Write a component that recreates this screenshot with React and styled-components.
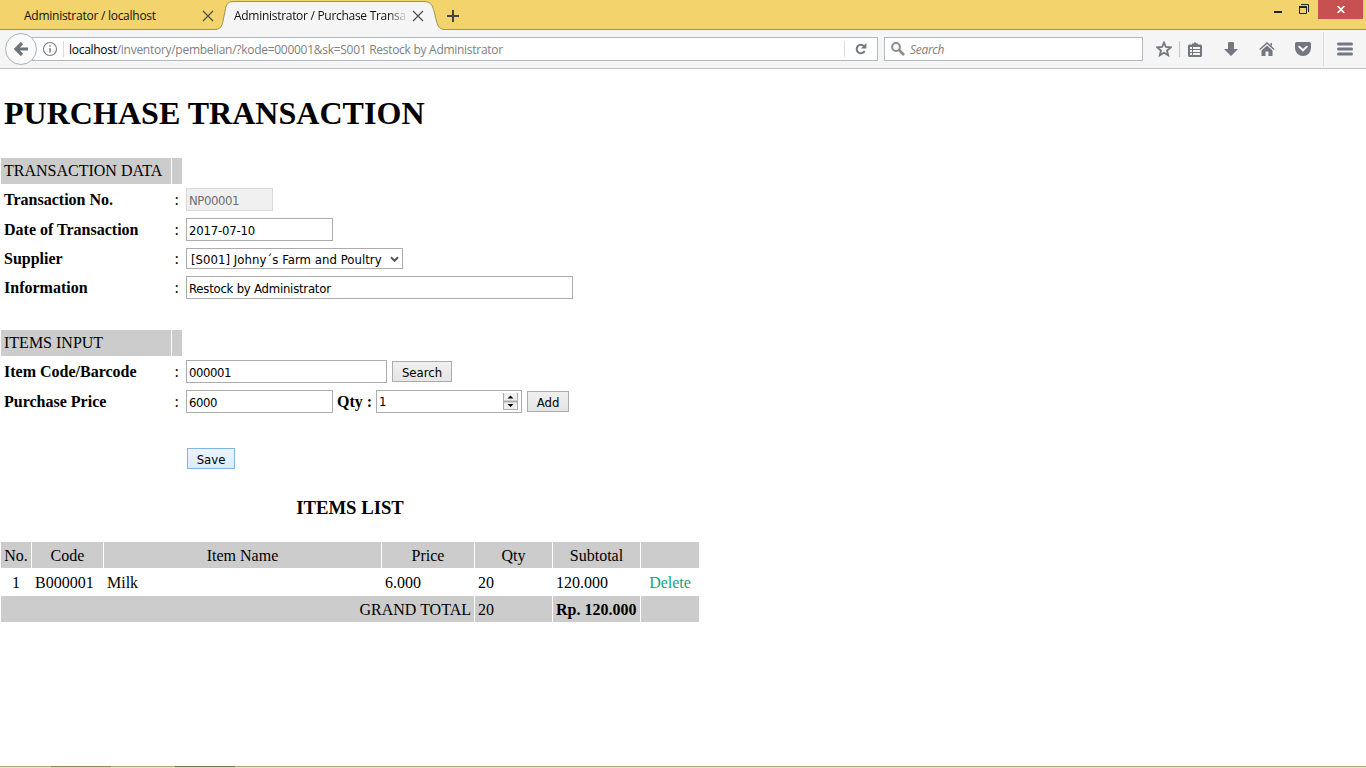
import React from "react";
import styled, { createGlobalStyle } from "styled-components";

const ui = '"Open Sans", "Noto Sans", sans-serif';
const control = '"DejaVu Sans Condensed", "DejaVu Sans", sans-serif';
const serif = '"Liberation Serif", "Times New Roman", serif';

const GlobalStyle = createGlobalStyle`
  * { box-sizing: border-box; }
  body { margin: 0; background: #fff; overflow: hidden; }
`;

const Window = styled.div`
  width: 1366px;
  height: 768px;
  display: flex;
  flex-direction: column;
  background: #fff;
  overflow: hidden;
`;

/* ---------- browser frame ---------- */
const TabStrip = styled.div`
  height: 30px;
  display: flex;
  align-items: stretch;
  background: #f3d36b;
  box-shadow: inset 0 -1px #a1934f;
`;
const Tab = styled.div`
  position: relative;
  width: ${(p) => p.$width}px;
  padding: 0 ${(p) => p.$end}px 0 ${(p) => p.$start}px;
  display: flex;
  align-items: center;
  justify-content: space-between;
  color: #111;
`;
const TabShape = styled.svg`
  position: absolute;
  left: 0;
  top: 0;
`;
const TabTitle = styled.span`
  position: relative;
  width: 172px;
  height: 18px;
  margin-top: 2px;
  white-space: nowrap;
  font: 12px/18px ${ui};
  letter-spacing: ${(p) => p.$track}px;
  ${(p) => p.$fade && "mask-image: linear-gradient(90deg, #000 155px, transparent 174px);"}
`;
const Icon = styled.svg`
  position: relative;
  flex: none;
  display: block;
  margin-left: ${(p) => p.$gap || 0}px;
  margin-top: ${(p) => p.$drop || 0}px;
`;
const WindowControls = styled.div`
  margin-left: auto;
  display: flex;
  align-items: flex-start;
`;
const CloseButton = styled.div`
  width: 45px;
  height: 19px;
  margin: 0 3px 0 9px;
  display: flex;
  align-items: center;
  justify-content: center;
  background: #c75050;
`;
const Toolbar = styled.div`
  height: 39px;
  display: flex;
  align-items: center;
  padding-left: 5px;
  background: #f5f5f5;
  border-bottom: 1px solid #c1c1c1;
`;
const BackButton = styled.div`
  position: relative;
  z-index: 1;
  width: 32px;
  height: 32px;
  border: 1px solid #a9b3bf;
  border-radius: 50%;
  background: #fafafa;
  display: flex;
  align-items: center;
  justify-content: center;
`;
const Field = styled.div`
  height: 24px;
  width: ${(p) => p.$width}px;
  margin-left: ${(p) => p.$gap}px;
  padding-left: ${(p) => p.$pad}px;
  border: 1px solid #b1bac4;
  background: #fff;
  display: flex;
  align-items: center;
  font: ${(p) => (p.$italic ? "italic" : "normal")} 12px/18px ${ui};
  letter-spacing: ${(p) => p.$track}px;
  color: #808080;
  white-space: nowrap;
`;
const Address = styled.span`
  flex: 1;
  margin-left: 5px;
  padding-top: 2px;
  b { font-weight: 400; color: #000; }
`;
const Rule = styled.span`
  width: 1px;
  height: ${(p) => p.$h}px;
  margin-left: ${(p) => p.$gap}px;
  background: ${(p) => p.$tone || "#dcdcdc"};
`;

/* ---------- page ---------- */
const Page = styled.main`
  flex: 1;
  font: 16px/20px ${serif};
  color: #000;
`;
const Title = styled.h1`
  margin: 26px 0 26px 4px;
  font: bold 32px/37px ${serif};
  letter-spacing: 0.03px;
`;
const FormRow = styled.div`
  display: grid;
  grid-template-columns: 170px 10px auto;
  column-gap: 1px;
  justify-content: start;
  height: ${(p) => p.$h}px;
  margin: 0 0 1px 1px;
`;
const HeadCell = styled.div`
  padding: 3px;
  background: #ccc;
  white-space: nowrap;
`;
const Label = styled.div`
  padding-left: 3px;
  align-self: center;
  font-weight: bold;
  white-space: nowrap;
`;
const Colon = styled.div`
  padding-left: 2.5px;
  align-self: center;
`;
const Controls = styled.div`
  padding-left: 3px;
  display: flex;
  align-items: center;
`;
const Box = styled.div`
  height: ${(p) => p.$h || 23}px;
  width: ${(p) => p.$width}px;
  padding: 1px 2px 0;
  display: flex;
  align-items: center;
  justify-content: space-between;
  border: 1px solid ${(p) => (p.$disabled ? "#d9d9d9" : "#ababb0")};
  background: ${(p) => (p.$disabled ? "#f0f0f0" : "#fff")};
  color: ${(p) => (p.$disabled ? "#6d6d6d" : "#000")};
  font: 13px/17px ${control};
  letter-spacing: ${(p) => p.$track || 0}px;
  white-space: nowrap;
`;
const Picker = styled(Box)`
  padding: 1px 3px 0 4px;
`;
const Stepper = styled(Box)`
  padding: 0 3px 0 2px;
`;
const Button = styled.div`
  width: ${(p) => p.$width}px;
  height: 21px;
  margin-left: ${(p) => p.$gap}px;
  padding-top: 1px;
  display: flex;
  align-items: center;
  justify-content: center;
  border: 1px solid ${(p) => (p.$hot ? "#7eb4ea" : "#acacac")};
  background: ${(p) =>
    p.$hot ? "linear-gradient(#ecf4fc, #dcecfc)" : "linear-gradient(#f0f0f0, #e5e5e5)"};
  font: 13px/17px ${control};
  letter-spacing: ${(p) => p.$track || 0}px;
`;
const Inline = styled.b`
  margin-left: 4px;
  width: 39px;
  white-space: nowrap;
`;
const ListTitle = styled.h3`
  width: 700px;
  margin: 24px 0 22px;
  text-align: center;
  font: bold 18.72px/22px ${serif};
`;
const Items = styled.table`
  width: 700px;
  table-layout: fixed;
  border-collapse: separate;
  border-spacing: 1px;
`;
const Cell = styled.td`
  height: 26px;
  padding: 4px 3px 2px;
  line-height: 20px;
  background: ${(p) => (p.$shade ? "#ccc" : "transparent")};
  text-align: ${(p) => p.$align || "left"};
  white-space: nowrap;
`;
const Delete = styled.span`
  color: #16a085;
`;
const Taskbar = styled.div`
  height: 2px;
  display: flex;
  background: #efe8a6;
  border-top: 1px solid #aea777;
`;
const TaskItem = styled.span`
  width: 60px;
  height: 2px;
  margin: -1px 0 0 ${(p) => p.$gap}px;
  border-top: 1px solid ${(p) => p.$edge};
  background: #e6dc9c;
`;

const CloseX = () => (
  <Icon $drop={2} width="12" height="12" viewBox="0 0 12 12">
    <path d="M1 1 11 11M11 1 1 11" stroke="#4d4d4d" strokeWidth="1.2" />
  </Icon>
);

const columns = [30, 71, 277, 92, 77, 87, 58];
const headings = ["No.", "Code", "Item Name", "Price", "Qty", "Subtotal", ""];

function Browser() {
  return (
    <>
      <TabStrip>
        <Tab $width={214} $start={24} $end={0}>
          <TabTitle $track={-0.26}>Administrator / localhost</TabTitle>
          <CloseX />
        </Tab>
        <Tab $width={228} $start={20} $end={18}>
          <TabShape width="232" height="30" viewBox="0 0 232 30">
            <path
              d="M0 30V29.5H1C9 29.5 8.500 22 10.500 14C12 6 12 1.5 20 1.500H210C218 1.500 219 7 221 15C223 24 224 29.500 231 29.500V30Z"
              fill="#f5f5f5"
            />
            <path
              d="M0 29.5H1C9 29.5 8.500 22 10.500 14C12 6 12 1.5 20 1.500H210C218 1.500 219 7 221 15C223 24 224 29.500 231 29.500"
              fill="none"
              stroke="#a1934f"
            />
          </TabShape>
          <TabTitle $fade $track={-0.29}>Administrator / Purchase Transa</TabTitle>
          <CloseX />
        </Tab>
        <Icon $gap={5} $drop={10} width="12" height="12" viewBox="0 0 12 12">
          <path d="M6 0V12M0 6H12" stroke="#444" strokeWidth="2" />
        </Icon>
        <WindowControls>
          <Icon $drop={11} width="8" height="2" viewBox="0 0 8 2">
            <path d="M0 0H8V2H0Z" fill="#222" />
          </Icon>
          <Icon $gap={17} $drop={4} width="10" height="10" viewBox="0 0 10 10">
            <path d="M2 .5H9.5V8M.5 3V9.5H7.5V3" fill="none" stroke="#222" />
            <path d="M0 2H8V4H0Z" fill="#222" />
          </Icon>
          <CloseButton>
            <Icon width="8" height="7" viewBox="0 0 8 7">
              <path d="M.6 0 7.4 7M7.4 0 .6 7" stroke="#fff" strokeWidth="1.7" />
            </Icon>
          </CloseButton>
        </WindowControls>
      </TabStrip>
      <Toolbar>
        <BackButton>
          <Icon width="14" height="14" viewBox="0 0 14 14">
            <path d="M8 1 2 7l6 6M2.5 7H14" fill="none" stroke="#6f7479" strokeWidth="3.2" />
          </Icon>
        </BackButton>
        <Field $width={846} $gap={-5} $pad={9} $track={-0.28}>
          <Icon width="16" height="16" viewBox="0 0 16 16">
            <circle cx="8" cy="8" r="6.5" fill="none" stroke="#7c7c7c" strokeWidth="1.1" />
            <path d="M8 7v4.5M8 4.2v1.6" stroke="#7c7c7c" strokeWidth="1.5" />
          </Icon>
          <Rule $h={16} $gap={5} />
          <Address>
            <b>localhost</b>/inventory/pembelian/?kode=000001&amp;sk=S001 Restock by Administrator
          </Address>
          <Rule $h={16} $gap={0} />
          <Icon $gap={9} width="23" height="14" viewBox="0 0 23 14">
            <path d="M10 4.2A4.2 4.2 0 1 0 10.6 9" fill="none" stroke="#76797c" strokeWidth="2" />
            <path d="M12.4 1V6.6H6.8Z" fill="#76797c" />
          </Icon>
        </Field>
        <Field $width={259} $gap={6} $pad={6} $italic $track={-0.3}>
          <Icon width="14" height="14" viewBox="0 0 14 14">
            <circle cx="5" cy="5" r="3.9" fill="none" stroke="#8c8c8c" strokeWidth="2" />
            <path d="M8 8 13 13" stroke="#8c8c8c" strokeWidth="2.6" />
          </Icon>
          <Address>Search</Address>
        </Field>
        <Icon $gap={13} width="16" height="16" viewBox="0 0 16 16">
          <path
            d="M8 1.6 9.9 6 14.6 6.4 11 9.5 12.2 14.3 8 11.8 3.8 14.3 5 9.5 1.4 6.4 6.1 6Z"
            fill="none"
            stroke="#737880"
            strokeWidth="1.8"
          />
        </Icon>
        <Rule $h={16} $gap={7} $tone="#c4c4c4" />
        <Icon $gap={8} width="14" height="15" viewBox="0 0 14 15">
          <path
            fillRule="evenodd"
            d="M1.5 2.5H4V1.5H5.5L7 0 8.500 1.500H10V2.500H12.500Q14 2.500 14 4V13.500Q14 15 12.500 15H1.500Q0 15 0 13.500V4Q0 2.500 1.500 2.500ZM2 5V7H4V5ZM5 5V7H12V5ZM2 8V10H4V8ZM5 8V10H12V8ZM2 11V13H4V11ZM5 11V13H12V11Z"
            fill="#737880"
          />
        </Icon>
        <Icon $gap={22} width="14" height="14" viewBox="0 0 14 14">
          <path d="M4 1Q4 0 5 0H9Q10 0 10 1V7H14L7 14 0 7H4Z" fill="#737880" />
        </Icon>
        <Icon $gap={21} width="16" height="14" viewBox="0 0 16 14">
          <path d="M.8 7.5 8 1l7.200 6.500" fill="none" stroke="#737880" strokeWidth="1.5" />
          <path d="M2.500 8.500 8 3.600 13.500 8.500V14H9.500V9.500H6.500V14H2.500ZM11.500 1H13V4L11.500 3Z" fill="#737880" />
        </Icon>
        <Icon $gap={20} width="16" height="14" viewBox="0 0 16 14">
          <path d="M1.500 0H14.500Q16 0 16 1.500V6A8 8 0 0 1 0 6V1.500Q0 0 1.500 0Z" fill="#737880" />
          <path d="M4.300 4.800 8 8.300 11.700 4.800" fill="none" stroke="#f5f5f5" strokeWidth="2" strokeLinecap="round" />
        </Icon>
        <Rule $h={34} $gap={12} />
        <Icon $gap={13} width="16" height="14" viewBox="0 0 16 14">
          <path d="M1.500 2H14.500M1.500 7H14.500M1.500 12H14.500" stroke="#737880" strokeWidth="3" strokeLinecap="round" />
        </Icon>
      </Toolbar>
    </>
  );
}

function Entry({ label, h = 29, children }) {
  return (
    <FormRow $h={h}>
      <Label>{label}</Label>
      <Colon>{label && ":"}</Colon>
      <Controls>{children}</Controls>
    </FormRow>
  );
}

function Section({ children }) {
  return (
    <FormRow $h={26}>
      <HeadCell>{children}</HeadCell>
      <HeadCell />
    </FormRow>
  );
}

export default function App() {
  return (
    <Window>
      <GlobalStyle />
      <Browser />
      <Page>
        <Title>PURCHASE TRANSACTION</Title>
        <Section>TRANSACTION DATA</Section>
        <Entry label="Transaction No.">
          <Box $width={87} $disabled $track={-0.42}>NP00001</Box>
        </Entry>
        <Entry label="Date of Transaction">
          <Box $width={147} $track={-0.2}>2017-07-10</Box>
        </Entry>
        <Entry label="Supplier" h={27}>
          <Picker $width={217} $h={21} $track={0.04}>
            [S001] Johny´s Farm and Poultry
            <Icon width="9" height="7" viewBox="0 0 9 7">
              <path d="M1 1.200 4.500 4.800 8 1.200" fill="none" stroke="#555" strokeWidth="2" />
            </Icon>
          </Picker>
        </Entry>
        <Entry label="Information">
          <Box $width={387} $track={-0.23}>Restock by Administrator</Box>
        </Entry>
        <Entry h={26} />
        <Section>ITEMS INPUT</Section>
        <Entry label="Item Code/Barcode">
          <Box $width={201} $track={-0.42}>000001</Box>
          <Button $width={60} $gap={5}>Search</Button>
        </Entry>
        <Entry label="Purchase Price">
          <Box $width={147} $track={-0.42}>6000</Box>
          <Inline>Qty :</Inline>
          <Stepper $width={146}>
            1
            <Icon width="15" height="18" viewBox="0 0 15 18">
              <path d="M.5 0V16.500H14.500V0" fill="#efefef" stroke="#acacac" />
              <path d="M0 8.500H15" stroke="#acacac" strokeWidth="2" />
              <path d="M4.500 5.500 7.500 2.500 10.500 5.500ZM4.500 11 7.500 14 10.500 11Z" fill="#000" />
            </Icon>
          </Stepper>
          <Button $width={42} $gap={5}>Add</Button>
        </Entry>
        <Entry h={26} />
        <Entry h={29}>
          <Button $width={48} $gap={1} $hot>Save</Button>
        </Entry>
        <ListTitle>ITEMS LIST</ListTitle>
        <Items>
          <colgroup>
            {columns.map((w, i) => (
              <col key={i} style={{ width: w }} />
            ))}
          </colgroup>
          <tbody>
            <tr>
              {headings.map((h, i) => (
                <Cell key={i} $shade $align="center">{h}</Cell>
              ))}
            </tr>
            <tr>
              <Cell $align="center">1</Cell>
              <Cell>B000001</Cell>
              <Cell>Milk</Cell>
              <Cell>6.000</Cell>
              <Cell>20</Cell>
              <Cell>120.000</Cell>
              <Cell $align="center"><Delete>Delete</Delete></Cell>
            </tr>
            <tr>
              <Cell $shade colSpan={4} $align="right">GRAND TOTAL</Cell>
              <Cell $shade>20</Cell>
              <Cell $shade><b>Rp. 120.000</b></Cell>
              <Cell $shade />
            </tr>
          </tbody>
        </Items>
      </Page>
      <Taskbar>
        <TaskItem $gap={51} $edge="#9a8560" />
        <TaskItem $gap={64} $edge="#806f50" />
      </Taskbar>
    </Window>
  );
}
